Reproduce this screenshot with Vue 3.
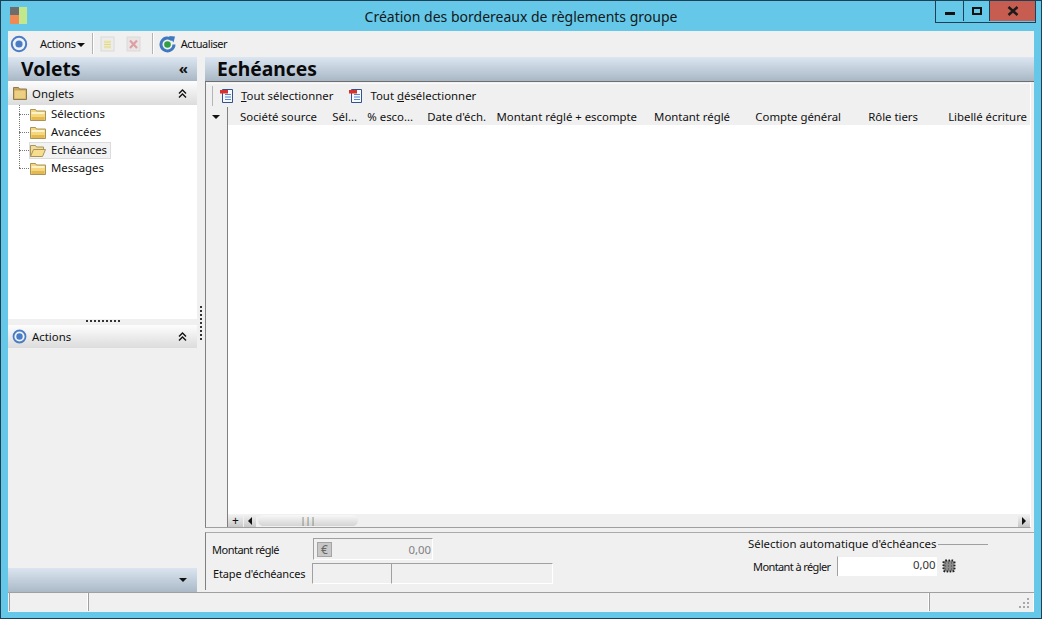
<script setup>
const folders = [
  { name: 'Sélections' },
  { name: 'Avancées' },
  { name: 'Echéances', open: true },
  { name: 'Messages' }
]
const columns = [
  { label: 'Société source', w: 90 },
  { label: 'Sél...', w: 40 },
  { label: '% esco...', w: 56 },
  { label: "Date d'éch.", w: 73 },
  { label: 'Montant réglé + escompte', w: 151 },
  { label: 'Montant réglé', w: 93 },
  { label: 'Compte général', w: 111 },
  { label: 'Rôle tiers', w: 77 },
  { label: 'Libellé écriture', w: 109 }
]
</script>

<template>
  <div class="window">
    <header class="titlebar">
      <svg class="logo" width="18" height="17" viewBox="0 0 18 17">
        <rect x="0" y="0" width="9" height="8" fill="#6d6d6d" />
        <rect x="0" y="8" width="9" height="9" fill="#f08a55" />
        <rect x="9" y="0" width="8" height="17" fill="#c3e88c" />
      </svg>
      <div class="title">Création des bordereaux de règlements groupe</div>
      <div class="winbtns">
        <div class="wb wb-min"><span class="min-glyph"></span></div>
        <div class="wb wb-max"><span class="max-glyph"></span></div>
        <div class="wb wb-close">
          <svg width="12" height="10" viewBox="0 0 12 10"><path d="M1.5 1 L10.5 9 M10.5 1 L1.5 9" stroke="#1b1b1b" stroke-width="2.4" /></svg>
        </div>
      </div>
    </header>

    <div class="client">
      <div class="toolbar">
        <svg class="ticon" width="18" height="18" viewBox="0 0 18 18">
          <circle cx="9" cy="9" r="7.2" fill="#eef3fb" stroke="#4a7cc4" stroke-width="2" />
          <circle cx="9" cy="9" r="3.6" fill="#4a7cc4" />
        </svg>
        <span class="tb-actions">Actions</span>
        <span class="caret"></span>
        <span class="tsep sep-a"></span>
        <svg class="dim d1" width="15" height="16" viewBox="0 0 15 16">
          <rect x="1" y="1" width="13" height="14" fill="#ececec" stroke="#dadada" />
          <rect x="4" y="4" width="7" height="9" fill="#f0ecc0" />
          <path d="M4 6h7M4 8.500h7M4 11h7" stroke="#ddd79a" />
        </svg>
        <svg class="dim d2" width="15" height="16" viewBox="0 0 15 16">
          <rect x="1" y="1" width="13" height="14" fill="#ebe4e4" stroke="#dadada" />
          <path d="M4 4.500l7 7.500M11 4.500l-7 7.500" stroke="#dca0a4" stroke-width="2.200" />
        </svg>
        <span class="tsep sep-b"></span>
        <svg class="refresh" width="17" height="18" viewBox="0 0 17 18">
          <path d="M13.300 5A6.500 6.500 0 1 0 15 9.500" fill="none" stroke="#3f78c0" stroke-width="3" />
          <path d="M10 1l6 .5-1.500 6z" fill="#3f78c0" />
          <circle cx="8.500" cy="9.500" r="3.300" fill="#2f9e44" />
        </svg>
        <span class="tb-refresh">Actualiser</span>
      </div>

      <div class="main">
        <aside class="left">
          <div class="pane-head">
            <span class="pane-title volets">Volets</span>
            <span class="chev chev-left">«</span>
          </div>
          <div class="section-head first-head">
            <svg class="head-folder" width="14" height="13" viewBox="0 0 14 13">
              <path d="M.5 12.500V.5h5l1 1.500h7v10.500z" fill="#c9a45a" stroke="#8f7a4c" />
              <path d="M1.500 3.500h11v8h-11z" fill="#eccf82" />
            </svg>
            <span class="section-name">Onglets</span>
            <svg class="dchev" width="9" height="9" viewBox="0 0 9 9"><path d="M1 4.500L4.500 1 8 4.500M1 8.500L4.500 5 8 8.500" fill="none" stroke="#111" stroke-width="1.400" /></svg>
          </div>
          <div class="tree">
            <span class="tree-trunk"></span>
            <div v-for="f in folders" :key="f.name" class="tree-row">
              <span class="branch"></span>
              <div class="tree-item" :class="{ selected: f.open }">
                <svg v-if="!f.open" width="16" height="13" viewBox="0 0 16 13">
                  <path d="M.5 12.500V1.500h5l1 1.500h9v9.500z" fill="#f4d77f" stroke="#a8935a" />
                  <path d="M1.500 4h13v2H1.500z" fill="#fdf3c6" />
                  <path d="M1.500 9h13v3H1.500z" fill="#e5b94f" />
                </svg>
                <svg v-else width="16" height="13" viewBox="0 0 16 13">
                  <path d="M.5 12.500V1.500h5l1 1.500h7v2" fill="#f1dc9c" stroke="#a8935a" />
                  <path d="M.5 12.500L3.500 5.500h12l-3 7z" fill="#f8dd8e" stroke="#a8935a" />
                </svg>
                <span class="tree-label">{{ f.name }}</span>
              </div>
            </div>
          </div>
          <div class="grip"><span class="grip-dots"></span></div>
          <div class="section-head">
            <svg class="head-target" width="15" height="15" viewBox="0 0 15 15">
              <circle cx="7.500" cy="7.500" r="6" fill="#eef3fb" stroke="#4a7cc4" stroke-width="1.800" />
              <circle cx="7.500" cy="7.500" r="3.200" fill="#4a7cc4" />
            </svg>
            <span class="section-name">Actions</span>
            <svg class="dchev" width="9" height="9" viewBox="0 0 9 9"><path d="M1 4.500L4.500 1 8 4.500M1 8.500L4.500 5 8 8.500" fill="none" stroke="#111" stroke-width="1.400" /></svg>
          </div>
          <div class="left-fill"></div>
          <div class="left-foot"><span class="foot-caret"></span></div>
        </aside>

        <div class="splitter"><span class="split-dots"></span></div>

        <section class="right">
          <div class="pane-head right-head">
            <span class="pane-title">Echéances</span>
          </div>
          <div class="grid-frame">
            <div class="grid-tools">
              <span class="gt-sep"></span>
              <svg class="doc" width="15" height="16" viewBox="0 0 15 16">
                <path d="M3.500 1.500h10v13h-10z" fill="#f4f8ff" stroke="#33518a" />
                <path d="M6 6.500h6M6 9h6M6 11.500h6" stroke="#5a86c8" />
                <rect x="1" y="2" width="8" height="3.500" fill="#d8312c" />
              </svg>
              <span class="gt-label"><u>T</u>out sélectionner</span>
              <svg class="doc doc2" width="15" height="16" viewBox="0 0 15 16">
                <path d="M3.500 1.500h10v13h-10z" fill="#f4f8ff" stroke="#33518a" />
                <path d="M6 6.500h6M6 9h6M6 11.500h6" stroke="#5a86c8" />
                <rect x="1" y="2" width="8" height="3.500" fill="#d8312c" />
              </svg>
              <span class="gt-label">Tout <u>d</u>ésélectionner</span>
            </div>
            <div class="grid-body">
              <div class="indicator">
                <span class="ind-caret"></span>
              </div>
              <div class="data">
                <div class="cols">
                  <span v-for="c in columns" :key="c.label" class="col" :style="{ width: c.w + 'px' }">{{ c.label }}</span>
                </div>
                <div class="rows"></div>
                <div class="hscroll">
                  <span class="plus">+</span>
                  <span class="sb-arrow sb-left"><span class="tri-l"></span></span>
                  <span class="sb-thumb"><span class="sb-grip">|||</span></span>
                  <span class="sb-space"></span>
                  <span class="sb-arrow"><span class="tri-r"></span></span>
                </div>
              </div>
            </div>
          </div>

          <div class="bottom">
            <div class="b-left">
              <div class="b-row">
                <span class="b-label lbl1">Montant réglé</span>
                <div class="amount-ro">
                  <span class="euro">€</span>
                  <span class="ro-val">0,00</span>
                </div>
              </div>
              <div class="b-row b-row2">
                <span class="b-label lbl2">Etape d'échéances</span>
                <div class="step s1"></div>
                <div class="step s2"></div>
              </div>
            </div>
            <div class="b-right">
              <div class="legend"><span>Sélection automatique d'échéances</span><span class="legend-line"></span></div>
              <div class="auto-row">
                <span class="b-label lbl3">Montant à régler</span>
                <div class="amount-in">0,00</div>
                <svg class="calc" width="14" height="14" viewBox="0 0 14 14">
                  <rect x="1.500" y="1.500" width="11" height="11" rx="2" fill="#8c8c8c" />
                  <rect x="1.500" y="1.500" width="11" height="11" rx="2" fill="none" stroke="#222" stroke-width="2" stroke-dasharray="1.500 1.500" />
                  <path d="M3 4h8M3 7h8M3 10h8" stroke="#444" stroke-dasharray="1 2" />
                </svg>
              </div>
            </div>
          </div>
        </section>
      </div>

      <footer class="status">
        <div class="st st1"></div>
        <div class="st st2"></div>
        <div class="st st3">
          <svg width="12" height="12" viewBox="0 0 12 12" fill="#a8a8a8">
            <rect x="9" y="1" width="2" height="2" /><rect x="5" y="5" width="2" height="2" /><rect x="9" y="5" width="2" height="2" />
            <rect x="1" y="9" width="2" height="2" /><rect x="5" y="9" width="2" height="2" /><rect x="9" y="9" width="2" height="2" />
          </svg>
        </div>
      </footer>
    </div>
  </div>
</template>

<style>
html, body { margin: 0; padding: 0; background: #69c9e8; }
</style>

<style scoped>
.window {
  box-sizing: border-box;
  width: 1042px;
  height: 619px;
  background: #66c8e8;
  border: 1px solid #1f3f55;
  padding: 0 7px 6px;
  display: flex;
  flex-direction: column;
  font-family: "Noto Sans", "Open Sans", sans-serif;
  font-size: 11.4px;
  color: #111;
  overflow: hidden;
}
.titlebar {
  height: 30px;
  flex: none;
  display: flex;
  align-items: flex-start;
  position: relative;
}
.logo { margin: 6px 0 0 2px; }
.title {
  position: absolute;
  left: 0;
  right: 0;
  top: 6px;
  text-align: center;
  font-size: 14px;
  line-height: 20px;
  color: #101820;
}
.winbtns {
  position: absolute;
  right: -2px;
  top: -1px;
  display: flex;
  height: 22px;
  border: 1px solid #1f3f55;
  border-top: 0;
}
.wb { display: flex; align-items: center; justify-content: center; height: 21px; }
.wb-min { width: 27px; border-right: 1px solid #1f3f55; }
.wb-max { width: 25px; border-right: 1px solid #1f3f55; }
.wb-close { width: 45px; background: #c75c50; }
.min-glyph { width: 10px; height: 3px; background: #111; margin-top: 6px; }
.max-glyph { box-sizing: border-box; width: 10px; height: 8px; border: 2px solid #111; }

.client {
  flex: 1;
  min-height: 0;
  background: #f0f0f0;
  display: flex;
  flex-direction: column;
}
.toolbar {
  height: 26px;
  box-sizing: border-box;
  padding-bottom: 1px;
  flex: none;
  display: flex;
  align-items: center;
  font-size: 11px;
  letter-spacing: -0.3px;
}
.ticon { margin-left: 2px; }
.tb-actions { margin-left: 12px; }
.caret {
  width: 0; height: 0; margin-left: 1px; margin-top: 2px;
  border-left: 4px solid transparent;
  border-right: 4px solid transparent;
  border-top: 4px solid #111;
}
.tsep { width: 1px; height: 21px; background: #b4b4b4; border-right: 1px solid #fff; }
.sep-a { margin-left: 7px; }
.d1 { margin-left: 6px; }
.d2 { margin-left: 11px; }
.sep-b { margin-left: 11px; }
.refresh { margin-left: 5px; }
.tb-refresh { margin-left: 5px; letter-spacing: -0.45px; }

.main { flex: 1; min-height: 0; display: flex; }
.left { width: 189px; flex: none; display: flex; flex-direction: column; }
.pane-head {
  height: 24px;
  flex: none;
  box-sizing: border-box;
  display: flex;
  align-items: center;
  background: linear-gradient(#dbe6f1, #a9b7c5);
}
.pane-title { font-weight: 700; font-size: 19.3px; line-height: 24px; color: #0a0a0a; padding-left: 13px; flex: 1; }
.chev { font-size: 15px; line-height: 20px; padding-right: 9px; margin-top: -2px; font-weight: 700; }
.section-head {
  height: 23px;
  flex: none;
  display: flex;
  align-items: center;
  padding-left: 5px;
  background: linear-gradient(#fdfdfd, #dcdcdc);
}
.first-head { height: 24px; }
.section-name { flex: 1; margin-left: 5px; }
.dchev { margin-right: 10px; }
.head-target { margin-left: -1px; }

.tree {
  height: 214px;
  flex: none;
  background: #fff;
  position: relative;
  box-sizing: border-box;
  padding: 0 0 0 22px;
}
.tree-row { height: 18px; display: flex; align-items: center; position: relative; }
.tree-trunk { position: absolute; left: 11px; top: 0; height: 63px; border-left: 1px dotted #777; }
.branch { position: absolute; left: -11px; top: 9px; width: 10px; border-top: 1px dotted #777; }
.tree-item {
  display: flex;
  align-items: center;
  height: 17px;
  box-sizing: border-box;
  padding: 0 2px 0 0;
}
.tree-label { margin-left: 5px; line-height: 16px; }
.selected { background: #f2f2f2; border: 1px solid #dcdcdc; margin-left: -1px; padding-right: 3px; }
.grip { height: 6px; flex: none; background: #f0f0f0; display: flex; justify-content: center; align-items: flex-start; }
.grip-dots { width: 34px; height: 2px; margin-top: 1px; background: repeating-linear-gradient(90deg, #333 0 2px, transparent 2px 4px); }
.left-fill { flex: 1; }
.left-foot {
  height: 24px;
  flex: none;
  display: flex;
  justify-content: flex-end;
  align-items: center;
  padding-right: 10px;
  background: linear-gradient(#dae5f0, #abb9c7);
}
.foot-caret { width: 0; height: 0; border-left: 4px solid transparent; border-right: 4px solid transparent; border-top: 4px solid #111; }

.splitter { width: 8px; flex: none; position: relative; }
.split-dots {
  position: absolute; left: 3px; top: 249px; width: 2px; height: 34px;
  background: repeating-linear-gradient(#333 0 2px, transparent 2px 4px);
}

.right { flex: 1; min-width: 0; display: flex; flex-direction: column; }
.right-head { height: 25px; border-bottom: 1px solid #6f6f6f; }
.right-head .pane-title { padding-left: 12px; }
.grid-frame {
  flex: none;
  height: 446px;
  box-sizing: border-box;
  margin-right: 3px;
  border-left: 1px solid #808080;
  border-bottom: 1px solid #a0a0a0;
  border-right: 1px solid #fff;
  display: flex;
  flex-direction: column;
  padding-top: 1px;
}
.grid-tools {
  height: 24px;
  box-sizing: border-box;
  flex: none;
  display: flex;
  align-items: center;
  background: #f0f0f0;
  border-top: 1px solid #fafafa;
}
.gt-sep { width: 1px; height: 20px; background: #b5b5b5; margin-left: 6px; }
.doc { margin-left: 6px; }
.gt-label { margin-left: 7px; }
.doc2 { margin-left: 15px; }
.grid-body { flex: 1; min-height: 0; display: flex; }
.indicator {
  width: 22px; flex: none; box-sizing: border-box; border-right: 1px solid #808080;
  display: flex; flex-direction: column; background: #f0f0f0;
}
.ind-caret {
  width: 0; height: 0; margin: 8px 0 0 6px;
  border-left: 4px solid transparent; border-right: 4px solid transparent; border-top: 4px solid #111;
}
.data { flex: 1; min-width: 0; display: flex; flex-direction: column; }
.cols { height: 18px; flex: none; display: flex; background: #f0f0f0; overflow: hidden; }
.col { flex: none; text-align: right; line-height: 20px; height: 18px; white-space: nowrap; box-sizing: border-box; padding-right: 1px; letter-spacing: -0.02px; }
.rows { flex: 1; background: #fff; }
.hscroll { height: 13px; flex: none; display: flex; background: #f0f0f0; align-items: stretch; }
.plus {
  width: 15px; flex: none; line-height: 13px; text-align: center;
  background: linear-gradient(#f4f4f4, #c8c8c8); font-size: 12px;
}
.sb-arrow { width: 12px; flex: none; display: flex; align-items: center; justify-content: center; background: linear-gradient(#f4f4f4, #c8c8c8); }
.sb-left { margin-left: 1px; }
.tri-l { width: 0; height: 0; border-top: 4px solid transparent; border-bottom: 4px solid transparent; border-right: 4px solid #111; }
.tri-r { width: 0; height: 0; border-top: 4px solid transparent; border-bottom: 4px solid transparent; border-left: 4px solid #111; }
.sb-thumb {
  width: 100px; flex: none; border-radius: 6px; margin: 1px 0 0 2px; height: 11px;
  background: linear-gradient(#f8f8f8, #d4d4d4); text-align: center; font-size: 9px; line-height: 11px; color: #666;
}
.sb-space { flex: 1; }

.bottom {
  flex: 1;
  min-height: 0;
  box-sizing: border-box;
  display: flex;
  justify-content: space-between;
  border-left: 1px solid #808080;
  border-top: 1px solid #aaa;
  margin-top: 4px;
  margin-bottom: 2px;
  font-size: 11px;
  letter-spacing: -0.15px;
}
.b-left { padding: 6px 0 0 6px; }
.b-row { display: flex; align-items: center; height: 20px; }
.b-row2 { margin-top: 4px; }
.lbl1 { width: 101px; flex: none; letter-spacing: -0.5px; }
.lbl2 { width: 100px; flex: none; padding-left: 1px; box-sizing: border-box; }
.lbl3 { letter-spacing: -0.6px; }
.amount-ro {
  width: 120px; height: 22px; box-sizing: border-box;
  border: 1px solid #a0a0a0; border-right-color: #fff; border-bottom-color: #fff;
  display: flex; align-items: center; justify-content: space-between; padding: 0 1px 0 3px;
  font-size: 11.4px; letter-spacing: 0; color: #808080;
}
.euro {
  width: 15px; height: 15px; background: #c8c8c8; border: 1px solid #a4a4a4; box-sizing: border-box;
  display: flex; align-items: center; justify-content: center; font-size: 12px; color: #666;
}
.step { height: 21px; box-sizing: border-box; border: 1px solid #a0a0a0; border-right-color: #fff; border-bottom-color: #fff; }
.s1 { width: 79px; border-right: 0; }
.s2 { width: 162px; }
.b-right { width: 286px; padding-top: 3px; flex: none; }
.legend { display: flex; align-items: center; line-height: 16px; font-size: 11.4px; letter-spacing: 0; width: 240px; }
.legend-line { flex: 1; border-top: 1px solid #a0a0a0; margin-left: 2px; }
.auto-row { display: flex; align-items: center; margin-top: 4px; padding-left: 5px; }
.amount-in {
  width: 100px; height: 20px; box-sizing: border-box; margin-left: 6px;
  background: #fff; border-left: 1px solid #a0a0a0; border-top: 1px solid #eee;
  text-align: right; padding-right: 1px; font-size: 11.4px; line-height: 15px; letter-spacing: 0; color: #333;
}
.calc { margin-left: 5px; }

.status {
  height: 20px;
  flex: none;
  display: flex;
  box-sizing: border-box;
  border-top: 1px solid #a0a0a0;
}
.st { border-right: 1px solid #fff; box-sizing: border-box; height: 18px; border-left: 1px solid #a0a0a0; }
.st1 { width: 79px; margin-left: 1px; }
.st2 { flex: 1; }
.st3 { width: 105px; display: flex; align-items: flex-end; justify-content: flex-end; padding: 0 3px 2px 0; }
</style>
